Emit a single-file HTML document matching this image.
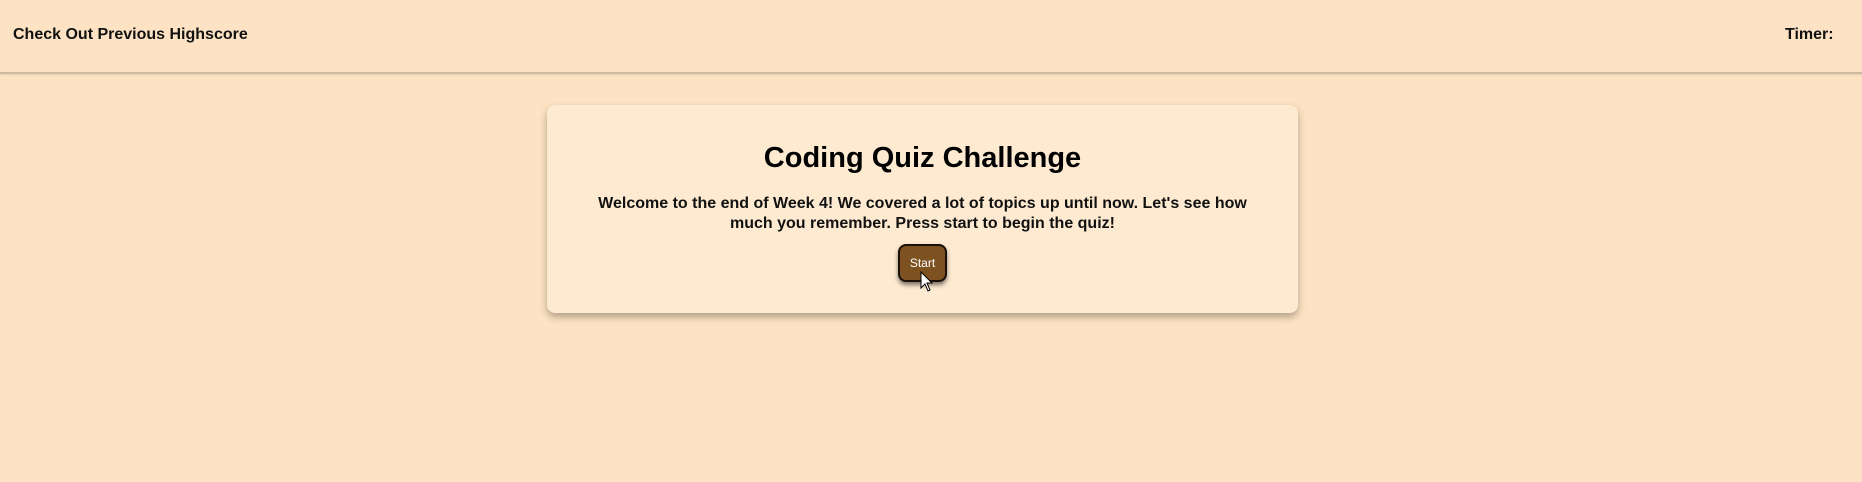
<!DOCTYPE html>
<html><head><meta charset="utf-8"><style>
html,body{margin:0;padding:0;}
body{width:1862px;height:482px;background:#fde3c3;font-family:"Liberation Sans",Arial,sans-serif;position:relative;overflow:hidden;}
.hdr{position:absolute;left:0;top:0;width:1862px;height:72px;border-bottom:2px solid #cdb8a0;box-shadow:0 1px 2px rgba(0,0,0,.1);}
.hs{position:absolute;left:13px;top:26px;font-size:16px;font-weight:bold;color:#111;}
.tm{position:absolute;left:1785px;top:26px;font-size:16px;font-weight:bold;color:#111;}
.card{position:absolute;left:547px;top:105px;width:751px;height:208px;background:#fdead1;border-radius:8px;box-shadow:0 4px 8px rgba(0,0,0,.3);text-align:center;}
h1{margin:0;position:absolute;left:0;right:0;top:36px;font-size:29px;line-height:34px;color:#000;}
p{margin:0;position:absolute;left:50px;right:50px;top:89px;font-size:16px;font-weight:bold;line-height:20px;color:#111;}
.btn{position:absolute;left:351px;top:139px;width:45px;height:34px;background:#7d5220;border:2px solid #1a1008;border-radius:8px;box-shadow:0 3px 4px rgba(0,0,0,.5);color:#fff;font-size:12px;line-height:34px;text-align:center;}
.cur{position:absolute;left:920px;top:271px;}
</style></head><body>
<div class="hdr"><div class="hs">Check Out Previous Highscore</div><div class="tm">Timer:</div></div>
<div class="card"><h1>Coding Quiz Challenge</h1>
<p>Welcome to the end of Week 4! We covered a lot of topics up until now. Let's see how much you remember. Press start to begin the quiz!</p>
<div class="btn">Start</div></div>
<svg class="cur" width="14" height="22" viewBox="0 0 14 22"><path d="M1 1 L1 17 L5 13 L8 20 L10 19 L7 12 L12 12 Z" fill="#fff" stroke="#000" stroke-width="1"/></svg>
</body></html>
